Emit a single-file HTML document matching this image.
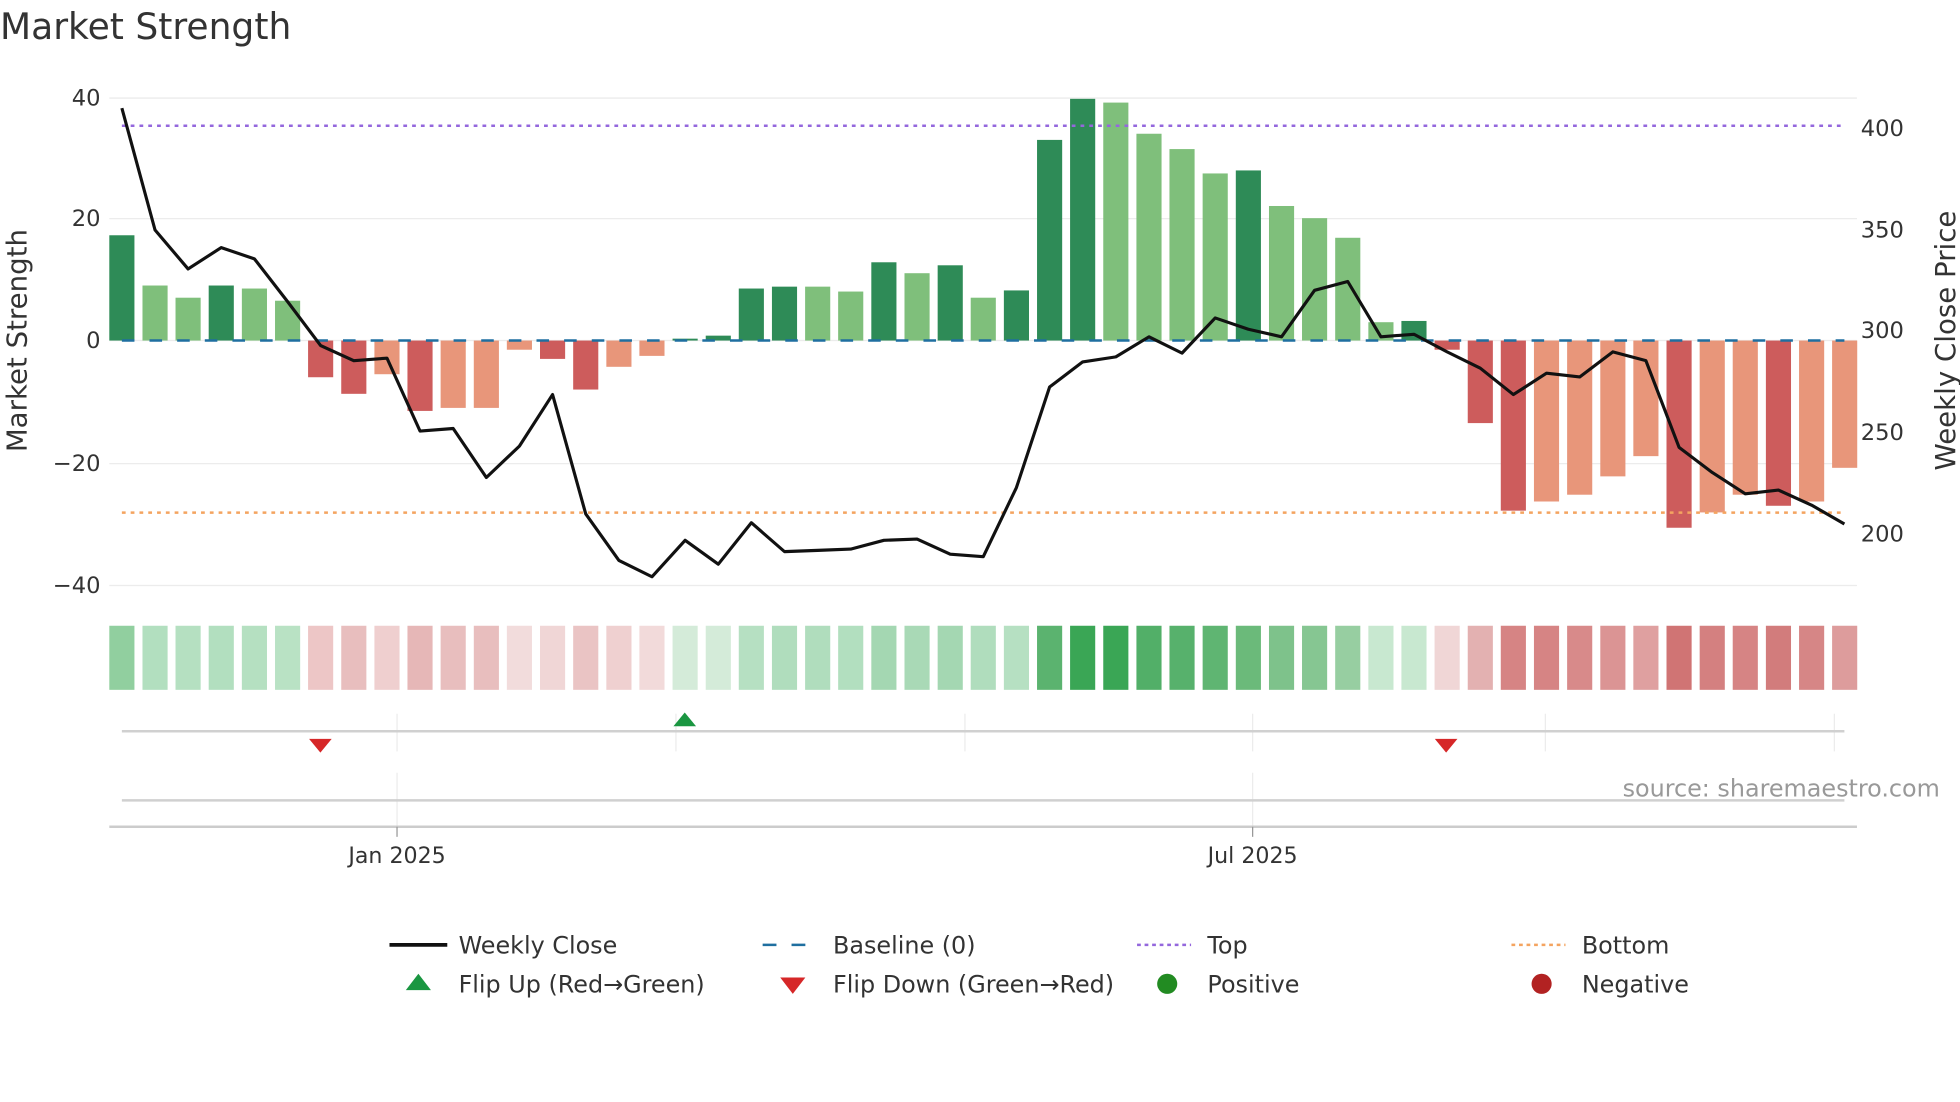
<!DOCTYPE html>
<html><head><meta charset="utf-8"><style>
html,body{margin:0;padding:0;background:#fff;width:1960px;height:1102px;overflow:hidden}
svg{display:block;font-family:"DejaVu Sans","Liberation Sans",sans-serif}
</style></head><body>
<svg width="1960" height="1102" viewBox="0 0 1560 877" xmlns="http://www.w3.org/2000/svg">
<text x="0" y="31" font-size="28.7" fill="#333">Market Strength</text>
<g stroke="#ececec" stroke-width="1">
<line x1="87" y1="78" x2="1478" y2="78"/><line x1="87" y1="174" x2="1478" y2="174"/><line x1="87" y1="271" x2="1478" y2="271"/><line x1="87" y1="369" x2="1478" y2="369"/><line x1="87" y1="466" x2="1478" y2="466"/>
</g>
<g font-size="18" fill="#333" text-anchor="end">
<text x="80" y="84">40</text><text x="80" y="180">20</text><text x="80" y="277">0</text><text x="80" y="375">−20</text><text x="80" y="472">−40</text>
</g>
<g font-size="18" fill="#333">
<text x="1481" y="108">400</text><text x="1481" y="189">350</text><text x="1481" y="269">300</text><text x="1481" y="350">250</text><text x="1481" y="431">200</text>
</g>
<text transform="translate(21,271) rotate(-90)" font-size="22" fill="#333" text-anchor="middle">Market Strength</text>
<text transform="translate(1556,271) rotate(-90)" font-size="22" fill="#333" text-anchor="middle">Weekly Close Price</text>
<g>
<rect x="87.0" y="187.2" width="20" height="83.8" fill="#2e8b57"/>
<rect x="113.4" y="227.2" width="20" height="43.8" fill="#7fbf7b"/>
<rect x="139.7" y="236.9" width="20" height="34.1" fill="#7fbf7b"/>
<rect x="166.1" y="227.2" width="20" height="43.8" fill="#2e8b57"/>
<rect x="192.5" y="229.6" width="20" height="41.4" fill="#7fbf7b"/>
<rect x="218.9" y="239.3" width="20" height="31.7" fill="#7fbf7b"/>
<rect x="245.2" y="271" width="20" height="29.2" fill="#cd5c5c"/>
<rect x="271.6" y="271" width="20" height="42.4" fill="#cd5c5c"/>
<rect x="298.0" y="271" width="20" height="26.8" fill="#e8967a"/>
<rect x="324.3" y="271" width="20" height="56" fill="#cd5c5c"/>
<rect x="350.7" y="271" width="20" height="53.6" fill="#e8967a"/>
<rect x="377.1" y="271" width="20" height="53.6" fill="#e8967a"/>
<rect x="403.4" y="271" width="20" height="7.3" fill="#e8967a"/>
<rect x="429.8" y="271" width="20" height="14.6" fill="#cd5c5c"/>
<rect x="456.2" y="271" width="20" height="39" fill="#cd5c5c"/>
<rect x="482.6" y="271" width="20" height="20.9" fill="#e8967a"/>
<rect x="508.9" y="271" width="20" height="12.2" fill="#e8967a"/>
<rect x="535.3" y="269.5" width="20" height="1.5" fill="#2e8b57"/>
<rect x="561.7" y="267.1" width="20" height="3.9" fill="#2e8b57"/>
<rect x="588.0" y="229.6" width="20" height="41.4" fill="#2e8b57"/>
<rect x="614.4" y="228.1" width="20" height="42.9" fill="#2e8b57"/>
<rect x="640.8" y="228.1" width="20" height="42.9" fill="#7fbf7b"/>
<rect x="667.1" y="232" width="20" height="39" fill="#7fbf7b"/>
<rect x="693.5" y="208.7" width="20" height="62.3" fill="#2e8b57"/>
<rect x="719.9" y="217.4" width="20" height="53.6" fill="#7fbf7b"/>
<rect x="746.3" y="211.1" width="20" height="59.9" fill="#2e8b57"/>
<rect x="772.6" y="236.9" width="20" height="34.1" fill="#7fbf7b"/>
<rect x="799.0" y="231.1" width="20" height="39.9" fill="#2e8b57"/>
<rect x="825.4" y="111.3" width="20" height="159.7" fill="#2e8b57"/>
<rect x="851.7" y="78.6" width="20" height="192.4" fill="#2e8b57"/>
<rect x="878.1" y="81.6" width="20" height="189.4" fill="#7fbf7b"/>
<rect x="904.5" y="106.4" width="20" height="164.6" fill="#7fbf7b"/>
<rect x="930.8" y="118.6" width="20" height="152.4" fill="#7fbf7b"/>
<rect x="957.2" y="138" width="20" height="133" fill="#7fbf7b"/>
<rect x="983.6" y="135.6" width="20" height="135.4" fill="#2e8b57"/>
<rect x="1010.0" y="163.9" width="20" height="107.1" fill="#7fbf7b"/>
<rect x="1036.3" y="173.6" width="20" height="97.4" fill="#7fbf7b"/>
<rect x="1062.7" y="189.2" width="20" height="81.8" fill="#7fbf7b"/>
<rect x="1089.1" y="256.4" width="20" height="14.6" fill="#7fbf7b"/>
<rect x="1115.4" y="255.4" width="20" height="15.6" fill="#2e8b57"/>
<rect x="1141.8" y="271" width="20" height="7.3" fill="#cd5c5c"/>
<rect x="1168.2" y="271" width="20" height="65.7" fill="#cd5c5c"/>
<rect x="1194.5" y="271" width="20" height="135.4" fill="#cd5c5c"/>
<rect x="1220.9" y="271" width="20" height="128.1" fill="#e8967a"/>
<rect x="1247.3" y="271" width="20" height="122.7" fill="#e8967a"/>
<rect x="1273.7" y="271" width="20" height="108.1" fill="#e8967a"/>
<rect x="1300.0" y="271" width="20" height="92" fill="#e8967a"/>
<rect x="1326.4" y="271" width="20" height="149" fill="#cd5c5c"/>
<rect x="1352.8" y="271" width="20" height="136.8" fill="#e8967a"/>
<rect x="1379.1" y="271" width="20" height="122.7" fill="#e8967a"/>
<rect x="1405.5" y="271" width="20" height="131.5" fill="#cd5c5c"/>
<rect x="1431.9" y="271" width="20" height="128.1" fill="#e8967a"/>
<rect x="1458.2" y="271" width="20" height="101.3" fill="#e8967a"/>
</g>
<line x1="97" y1="100" x2="1468" y2="100" stroke="#9467dd" stroke-width="2" stroke-dasharray="3,4"/>
<line x1="97" y1="408" x2="1468" y2="408" stroke="#f4a460" stroke-width="2" stroke-dasharray="3,4"/>
<line x1="97" y1="271" x2="1468" y2="271" stroke="#1f6fa0" stroke-width="2" stroke-dasharray="10,12"/>
<polyline fill="none" stroke="#111" stroke-width="2.5" stroke-linejoin="round" points="97,86 123.4,183 149.7,214 176.1,197 202.5,206 228.9,240 255.2,275 281.6,287 308,285 334.3,343 360.7,341 387.1,380 413.4,355 439.8,314 466.2,409 492.6,446 518.9,459 545.3,430 571.7,449 598,416 624.4,439 650.8,438 677.1,437 703.5,430 729.9,429 756.3,441 782.6,443 809,388 835.4,308 861.7,288 888.1,284 914.5,268 940.8,281 967.2,253 993.6,262 1020,268 1046.3,231 1072.7,224 1099.1,268 1125.4,266 1151.8,280 1178.2,293 1204.5,314 1230.9,297 1257.3,300 1283.7,280 1310,287 1336.4,356 1362.8,376 1389.1,393 1415.5,390 1441.9,402 1468,417"/>
<g>
<rect x="87.0" y="498" width="20" height="51" fill="#91cf9f"/>
<rect x="113.4" y="498" width="20" height="51" fill="#b2dfbf"/>
<rect x="139.7" y="498" width="20" height="51" fill="#b5e0c1"/>
<rect x="166.1" y="498" width="20" height="51" fill="#b2dfbf"/>
<rect x="192.5" y="498" width="20" height="51" fill="#b5e0c1"/>
<rect x="218.9" y="498" width="20" height="51" fill="#b9e2c4"/>
<rect x="245.2" y="498" width="20" height="51" fill="#edc6c6"/>
<rect x="271.6" y="498" width="20" height="51" fill="#e8bebe"/>
<rect x="298.0" y="498" width="20" height="51" fill="#efcfcf"/>
<rect x="324.3" y="498" width="20" height="51" fill="#e6b7b7"/>
<rect x="350.7" y="498" width="20" height="51" fill="#e8bebe"/>
<rect x="377.1" y="498" width="20" height="51" fill="#e8bebe"/>
<rect x="403.4" y="498" width="20" height="51" fill="#f2dcdc"/>
<rect x="429.8" y="498" width="20" height="51" fill="#f0d6d6"/>
<rect x="456.2" y="498" width="20" height="51" fill="#eac4c4"/>
<rect x="482.6" y="498" width="20" height="51" fill="#efd0d0"/>
<rect x="508.9" y="498" width="20" height="51" fill="#f2dada"/>
<rect x="535.3" y="498" width="20" height="51" fill="#d4ebd9"/>
<rect x="561.7" y="498" width="20" height="51" fill="#d4ebd9"/>
<rect x="588.0" y="498" width="20" height="51" fill="#b6e0c2"/>
<rect x="614.4" y="498" width="20" height="51" fill="#b0ddbd"/>
<rect x="640.8" y="498" width="20" height="51" fill="#b0ddbd"/>
<rect x="667.1" y="498" width="20" height="51" fill="#b2dfbf"/>
<rect x="693.5" y="498" width="20" height="51" fill="#a4d7b2"/>
<rect x="719.9" y="498" width="20" height="51" fill="#a9d9b6"/>
<rect x="746.3" y="498" width="20" height="51" fill="#a4d7b2"/>
<rect x="772.6" y="498" width="20" height="51" fill="#b0ddbd"/>
<rect x="799.0" y="498" width="20" height="51" fill="#b6e0c2"/>
<rect x="825.4" y="498" width="20" height="51" fill="#5bb36f"/>
<rect x="851.7" y="498" width="20" height="51" fill="#3aa655"/>
<rect x="878.1" y="498" width="20" height="51" fill="#3aa655"/>
<rect x="904.5" y="498" width="20" height="51" fill="#52af68"/>
<rect x="930.8" y="498" width="20" height="51" fill="#57b16c"/>
<rect x="957.2" y="498" width="20" height="51" fill="#5fb572"/>
<rect x="983.6" y="498" width="20" height="51" fill="#6bba7a"/>
<rect x="1010.0" y="498" width="20" height="51" fill="#7ec28b"/>
<rect x="1036.3" y="498" width="20" height="51" fill="#86c692"/>
<rect x="1062.7" y="498" width="20" height="51" fill="#97cea1"/>
<rect x="1089.1" y="498" width="20" height="51" fill="#c8e8d0"/>
<rect x="1115.4" y="498" width="20" height="51" fill="#c8e8d0"/>
<rect x="1141.8" y="498" width="20" height="51" fill="#f0d6d6"/>
<rect x="1168.2" y="498" width="20" height="51" fill="#e3b1b1"/>
<rect x="1194.5" y="498" width="20" height="51" fill="#d68484"/>
<rect x="1220.9" y="498" width="20" height="51" fill="#d68484"/>
<rect x="1247.3" y="498" width="20" height="51" fill="#d88a8a"/>
<rect x="1273.7" y="498" width="20" height="51" fill="#db9494"/>
<rect x="1300.0" y="498" width="20" height="51" fill="#dfa0a0"/>
<rect x="1326.4" y="498" width="20" height="51" fill="#d07474"/>
<rect x="1352.8" y="498" width="20" height="51" fill="#d48080"/>
<rect x="1379.1" y="498" width="20" height="51" fill="#d68484"/>
<rect x="1405.5" y="498" width="20" height="51" fill="#d27c7c"/>
<rect x="1431.9" y="498" width="20" height="51" fill="#d68686"/>
<rect x="1458.2" y="498" width="20" height="51" fill="#dd9c9c"/>
</g>
<g stroke="#ececec" stroke-width="1">
<line x1="316" y1="568" x2="316" y2="598"/><line x1="538" y1="568" x2="538" y2="598"/><line x1="768" y1="568" x2="768" y2="598"/><line x1="997" y1="568" x2="997" y2="598"/><line x1="1230" y1="568" x2="1230" y2="598"/><line x1="1460" y1="568" x2="1460" y2="598"/>
<line x1="316" y1="615" x2="316" y2="660"/><line x1="997" y1="615" x2="997" y2="660"/>
</g>
<line x1="97" y1="582" x2="1468" y2="582" stroke="#d0d0d0" stroke-width="2"/>
<line x1="97" y1="637" x2="1468" y2="637" stroke="#d0d0d0" stroke-width="2"/>
<line x1="87" y1="658" x2="1478" y2="658" stroke="#ccc" stroke-width="2"/>
<line x1="316" y1="658" x2="316" y2="666" stroke="#999" stroke-width="1"/>
<line x1="997" y1="658" x2="997" y2="666" stroke="#999" stroke-width="1"/>
<polygon points="246,588 264,588 255,599" fill="#d62728"/>
<polygon points="1142,588 1160,588 1151,599" fill="#d62728"/>
<polygon points="536,578 554,578 545,567" fill="#1a9641"/>
<text x="1544" y="634" font-size="19" fill="#999" text-anchor="end">source: sharemaestro.com</text>
<g font-size="17.6" fill="#333" text-anchor="middle">
<text x="316" y="687">Jan 2025</text><text x="997" y="687">Jul 2025</text>
</g>
<g font-size="19" fill="#333">
<line x1="310" y1="752" x2="356" y2="752" stroke="#111" stroke-width="3"/>
<text x="365" y="759">Weekly Close</text>
<line x1="607" y1="752" x2="650" y2="752" stroke="#1f6fa0" stroke-width="2" stroke-dasharray="11,12"/>
<text x="663" y="759">Baseline (0)</text>
<line x1="905" y1="752" x2="948" y2="752" stroke="#9467dd" stroke-width="2" stroke-dasharray="3,3"/>
<text x="961" y="759">Top</text>
<line x1="1203" y1="752" x2="1246" y2="752" stroke="#f4a460" stroke-width="2" stroke-dasharray="3,3"/>
<text x="1259" y="759">Bottom</text>
<polygon points="323,788 343,788 333,775" fill="#1a9641"/>
<text x="365" y="790">Flip Up (Red→Green)</text>
<polygon points="621,778 641,778 631,791" fill="#d62728"/>
<text x="663" y="790">Flip Down (Green→Red)</text>
<circle cx="929" cy="783" r="8" fill="#228b22"/>
<text x="961" y="790">Positive</text>
<circle cx="1227" cy="783" r="8" fill="#b22222"/>
<text x="1259" y="790">Negative</text>
</g>
</svg>
</body></html>
